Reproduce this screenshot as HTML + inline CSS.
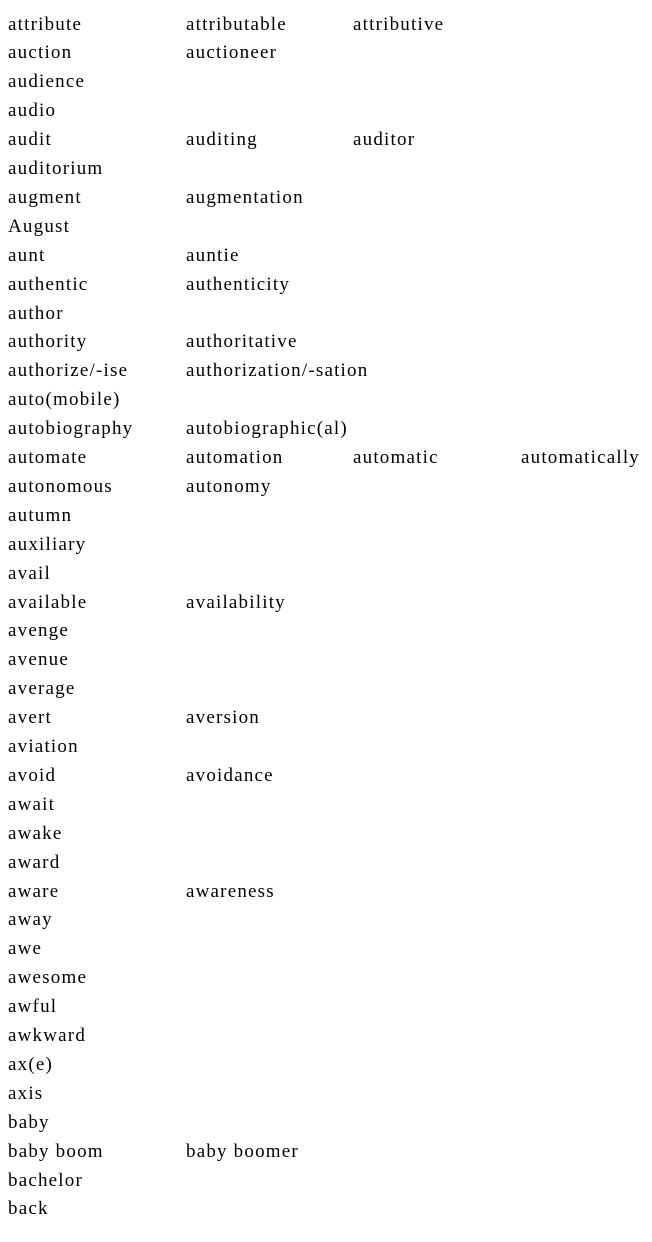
<!DOCTYPE html>
<html><head><meta charset="utf-8"><style>
body{margin:0;width:652px;height:1242px;background:#fff;position:relative;overflow:hidden;font-family:"Liberation Serif",serif;font-size:19px;letter-spacing:1.2px;color:#000}
.r{position:absolute;left:0;height:29px;line-height:29px;white-space:nowrap;width:652px}
.r span{position:absolute}
.c0{left:8px}.c1{left:186px}.c2{left:353px}.c3{left:521px}
</style></head><body>
<div id="w"></div>
<script>
var rows=[["attribute","attributable","attributive"],["auction","auctioneer"],["audience"],["audio"],["audit","auditing","auditor"],["auditorium"],["augment","augmentation"],["August"],["aunt","auntie"],["authentic","authenticity"],["author"],["authority","authoritative"],["authorize/-ise","authorization/-sation"],["auto(mobile)"],["autobiography","autobiographic(al)"],["automate","automation","automatic","automatically"],["autonomous","autonomy"],["autumn"],["auxiliary"],["avail"],["available","availability"],["avenge"],["avenue"],["average"],["avert","aversion"],["aviation"],["avoid","avoidance"],["await"],["awake"],["award"],["aware","awareness"],["away"],["awe"],["awesome"],["awful"],["awkward"],["ax(e)"],["axis"],["baby"],["baby boom","baby boomer"],["bachelor"],["back"]];
var h="";rows.forEach(function(r,i){h+='<div class="r" style="top:'+(9.5+i*28.9).toFixed(1)+'px">';r.forEach(function(t,j){h+='<span class="c'+j+'">'+t+'</span>'});h+='</div>'});
document.getElementById("w").innerHTML=h;
</script>
</body></html>
